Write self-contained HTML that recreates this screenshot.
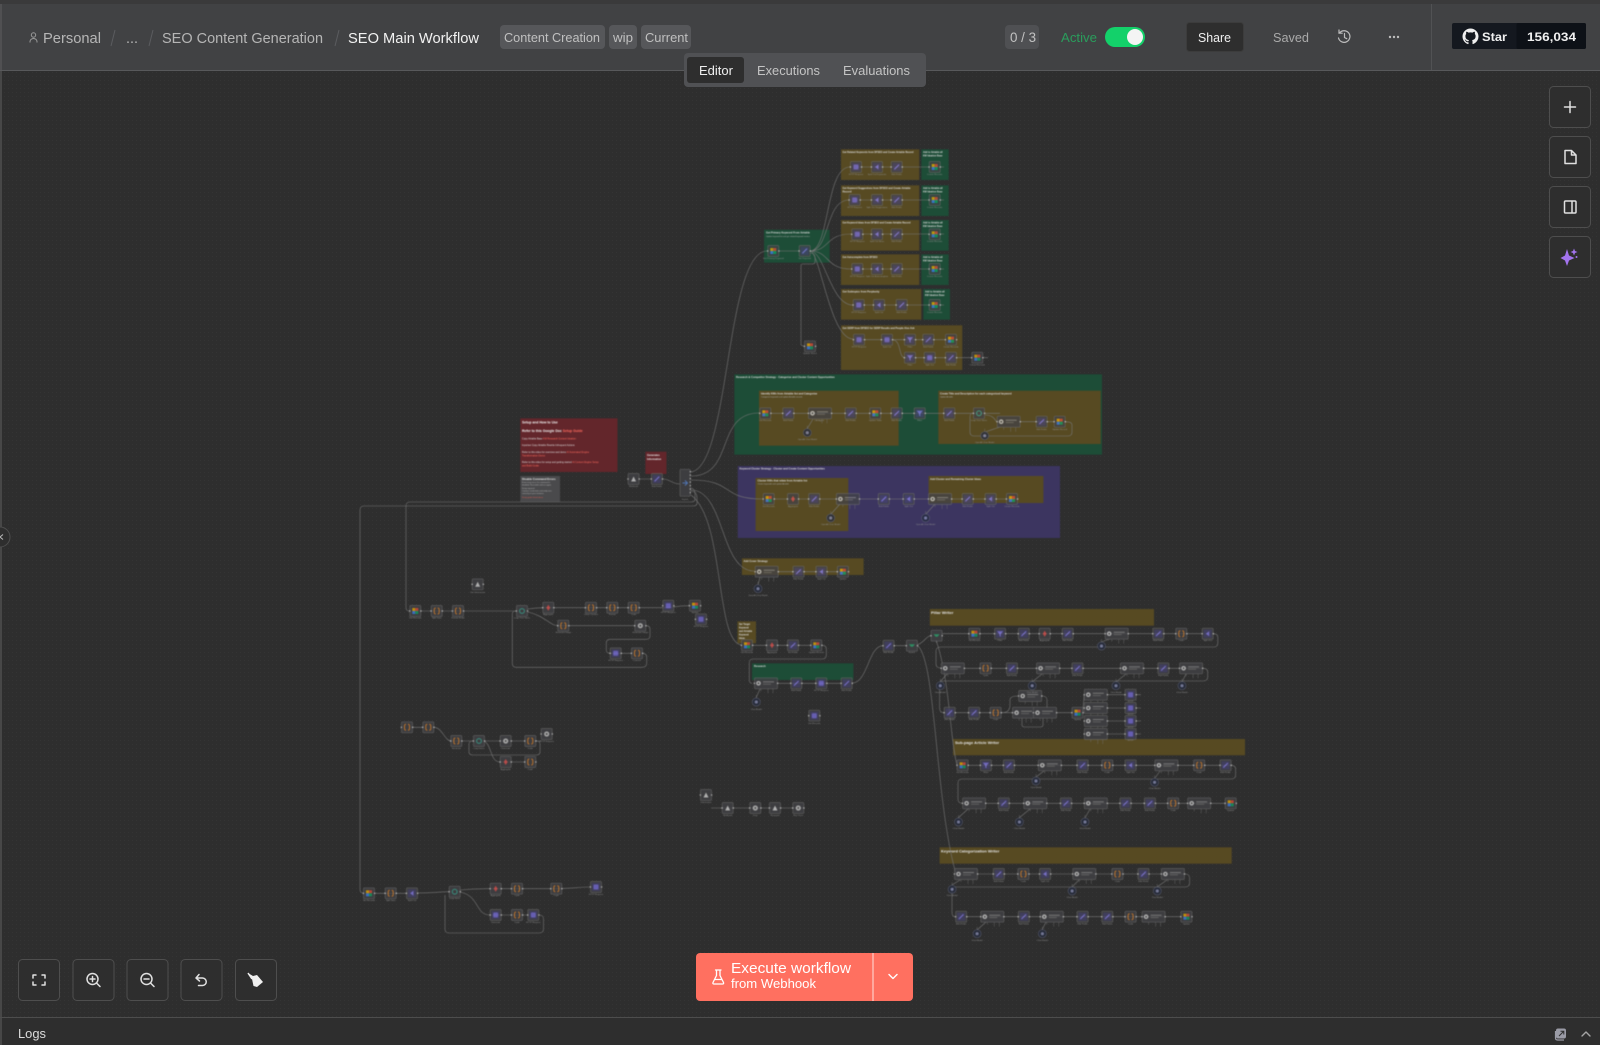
<!DOCTYPE html>
<html lang="en">
<head>
<meta charset="utf-8">
<title>SEO Main Workflow</title>
<style>
html,body{margin:0;padding:0;width:1600px;height:1045px;overflow:hidden;background:#2e2e2e}
svg{display:block;font-family:"Liberation Sans",sans-serif}
.ui{font-size:14px}
.graph{filter:blur(.4px)}
.w{fill:none;stroke:#767676;stroke-width:.6}
.t{fill:#dcdcdc;font-size:2.6px;font-weight:700}
.t2{fill:#dcdcdc;font-size:2.3px;font-weight:700}
.s{fill:#b0b0b0;font-size:1.9px}
.l{fill:#8e8e8e;font-size:2.2px;text-anchor:middle}
.nodes{opacity:.74}
.b{fill:#2e2e2e;stroke:#4e4e4e;stroke-width:1}
.i{fill:none;stroke:#e0e0e0;stroke-width:1.5;stroke-linecap:round;stroke-linejoin:round}
</style>
</head>
<body>
<svg width="1600" height="1045" viewBox="0 0 1600 1045" xmlns="http://www.w3.org/2000/svg">
<defs>
<pattern id="dots" width="4" height="4" patternUnits="userSpaceOnUse"><rect x="0" y="0" width="1" height="1" fill="#343434"/></pattern>
<g id="base"><rect x="-5.5" y="-5.5" width="11" height="11" rx="1" fill="#434347" stroke="#6c6c6c" stroke-width=".7"/><rect x="-6.3" y="-.7" width="1.4" height="1.4" fill="#d0d0d0"/><rect x="4.9" y="-.7" width="1.4" height="1.4" fill="#d0d0d0"/></g>
<g id="p"><use href="#base"/><rect x="-4" y="-4" width="8" height="8" fill="#47456e"/><path d="M-2.3 2.3L2.3-2.3" stroke="#8b80f0" stroke-width="1.2"/></g>
<g id="g"><use href="#base"/><rect x="-3" y="-3" width="3" height="3" fill="#f4b400"/><rect x="0" y="-3" width="3" height="3" fill="#e8503a"/><rect x="-3" y="0" width="3" height="3" fill="#4285f4"/><rect x="0" y="0" width="3" height="3" fill="#0fa968"/></g>
<g id="o"><use href="#base"/><path d="M-1 -3Q-2.5 -3 -2.5 -1V1Q-2.5 3 -1 3M1 -3Q2.5 -3 2.5 -1V1Q2.5 3 1 3" fill="none" stroke="#e8892c" stroke-width="1"/></g>
<g id="f"><use href="#base"/><rect x="-4" y="-4" width="8" height="8" fill="#47456e"/><path d="M-3-2.5H3L.6.5V3L-.6 2.2V.5Z" fill="#8b80f0"/></g>
<g id="m"><use href="#base"/><rect x="-4" y="-4" width="8" height="8" fill="#47456e"/><rect x="-2.5" y="-2.5" width="5" height="5" rx="1" fill="#7a70e0"/></g>
<g id="a"><use href="#base"/><rect x="-4" y="-4" width="8" height="8" fill="#47456e"/><path d="M1.5-2.5V2.5L-2 0Z" fill="#8b80f0"/></g>
<g id="k"><use href="#base"/><circle r="2.4" fill="none" stroke="#3db39c" stroke-width="1"/></g>
<g id="r"><use href="#base"/><path d="M0-3L2 0L0 3L-2 0Z" fill="#e0524f"/></g>
<g id="h"><use href="#base"/><circle r="2.6" fill="#cfcfcf"/><circle r="1" fill="#555"/></g>
<g id="n"><use href="#base"/><path d="M-2.5 2.5L0-2.5L2.5 2.5Z" fill="#dcdcdc"/></g>
<g id="e"><use href="#base"/><path d="M-3-1.5H3L1 1H-1Z" fill="#2fae75"/></g>
<g id="w"><rect x="-11.5" y="-5.5" width="23" height="11" rx="1" fill="#434347" stroke="#6c6c6c" stroke-width=".7"/><circle cx="-7.5" r="2.3" fill="#dcdcdc"/><circle cx="-7.5" r="1" fill="#555"/><rect x="-3" y="-2" width="11" height="1.1" fill="#8c8c8c"/><rect x="-3" y=".3" width="8" height="1.1" fill="#6e6e6e"/><rect x="-12.3" y="-.7" width="1.4" height="1.4" fill="#d0d0d0"/><rect x="10.9" y="-.7" width="1.4" height="1.4" fill="#d0d0d0"/><path d="M-5 5.5V8M2 5.5V10M7 5.5V10" stroke="#777" stroke-width=".5"/></g>
<g id="c"><circle r="4" fill="#242a3e" stroke="#5c6075" stroke-width=".7"/><circle r="1.6" fill="#8b90b8"/><path d="M0-4V-7" stroke="#777" stroke-width=".5"/></g>
</defs>

<!-- canvas -->
<rect width="1600" height="1045" fill="#2e2e2e"/>
<rect width="1600" height="1045" fill="url(#dots)"/>
<rect x="0" y="0" width="2" height="1045" fill="#474747"/>

<!-- GRAPH -->
<g class="graph">
<!-- sticky notes -->
<g fill="#574a22">
<rect x="841" y="149.3" width="78.3" height="30.7"/><rect x="841" y="185.3" width="78.3" height="30.7"/><rect x="841" y="220" width="78.3" height="30.7"/><rect x="841" y="254.3" width="78.3" height="30.7"/><rect x="841" y="289" width="80.3" height="30.7"/><rect x="841" y="325.3" width="121.3" height="44.7"/>
</g>
<g fill="#1d4d37">
<rect x="921.3" y="149.3" width="27.4" height="30.7"/><rect x="921.3" y="185.3" width="27.4" height="30.7"/><rect x="921.3" y="220" width="27.4" height="30.7"/><rect x="921.3" y="254.3" width="27.4" height="30.7"/><rect x="923.3" y="289" width="26.7" height="30.7"/><rect x="764" y="229.7" width="65.7" height="33"/><rect x="734.3" y="374.3" width="367.7" height="80.4"/><rect x="752" y="663.3" width="101.4" height="16.7"/>
</g>
<rect x="737.7" y="466" width="322.3" height="72" fill="#3c3560"/>
<g fill="#574a22">
<rect x="759" y="390.7" width="139.7" height="55"/><rect x="938.3" y="390.7" width="162.4" height="53.3"/><rect x="755.6" y="478" width="92.7" height="53"/><rect x="928.6" y="476" width="114.8" height="27"/><rect x="741.9" y="558.3" width="121.7" height="16.7"/><rect x="737.4" y="621.3" width="18.6" height="22"/><rect x="929.8" y="609" width="224.2" height="16.7"/><rect x="953" y="739" width="292" height="16.3"/><rect x="939.6" y="847.3" width="292.1" height="16.4"/>
</g>
<rect x="520.3" y="418.3" width="97.2" height="53.7" fill="#63262b"/>
<rect x="645.4" y="451.7" width="21.1" height="22.3" fill="#63262b"/>
<rect x="520.3" y="476" width="39.7" height="25.7" fill="#4a4a4c"/>

<!-- sticky text -->
<text class="t" x="842.5" y="153" textLength="71" lengthAdjust="spacingAndGlyphs">Get Related Keywords from DFSEO and Create Airtable Record</text>
<text class="t" x="842.5" y="189" textLength="68" lengthAdjust="spacingAndGlyphs">Get Keyword Suggestions from DFSEO and Create Airtable</text><text class="t" x="842.5" y="192.5">Record</text>
<text class="t" x="842.5" y="223.5" textLength="68" lengthAdjust="spacingAndGlyphs">Get Keyword Ideas from DFSEO and Create Airtable Record</text>
<text class="t" x="842.5" y="258" textLength="35" lengthAdjust="spacingAndGlyphs">Get Autocomplete from DFSEO</text>
<text class="t" x="842.5" y="292.5" textLength="37" lengthAdjust="spacingAndGlyphs">Get Subtopics from Perplexity</text>
<text class="t" x="842.5" y="329" textLength="72" lengthAdjust="spacingAndGlyphs">Get SERP from DFSEO for SERP Results and People Also Ask</text>
<g class="t2"><text x="923" y="153">Add to Airtable all</text><text x="923" y="156.5">KW Ideation Base</text><text x="923" y="189">Add to Airtable all</text><text x="923" y="192.5">KW Ideation Base</text><text x="923" y="223.5">Add to Airtable all</text><text x="923" y="227">KW Ideation Base</text><text x="923" y="258">Add to Airtable all</text><text x="923" y="261.5">KW Ideation Base</text><text x="925" y="292.5">Add to Airtable all</text><text x="925" y="296">KW Ideation Base</text></g>
<text class="t" x="766" y="233.5">Get Primary Keyword From Airtable</text>
<text class="s" x="766" y="237">Update keyword list and get related keyword metrics</text>
<text class="t" x="736" y="378">Research &amp; Competitor Strategy - Categorize and Cluster Content Opportunities</text>
<text class="t" x="761" y="394.5">Identify KWs from Airtable list and Categorize</text>
<text class="s" x="761" y="397.5">Categorize keywords and update Airtable records</text>
<text class="t" x="940" y="394.5">Create Title and Description for each categorized keyword</text>
<text class="s" x="940" y="397.5">Update Airtable</text>
<text class="t" x="739.5" y="469.5">Keyword Cluster Strategy - Cluster and Create Content Opportunities</text>
<text class="t" x="757.5" y="481.5">Cluster KWs that relate from Airtable list</text>
<text class="s" x="757.5" y="484.5">Cluster keywords and update Airtable</text>
<text class="t" x="930" y="480">Add Cluster and Remaining Cluster Ideas</text>
<text class="t" x="743.5" y="562">Add Cover Strategy</text>
<g class="t2"><text x="739" y="625">Set Target</text><text x="739" y="628.5">Keyword</text><text x="739" y="632">and Airtable</text><text x="739" y="635.5">Keyword</text><text x="739" y="639">Ideas</text></g>
<text class="t" x="754" y="667">Research</text>
<text x="931" y="614" fill="#e4e4e4" font-size="4" font-weight="700">Pillar Writer</text>
<text x="955" y="744" fill="#e4e4e4" font-size="4" font-weight="700">Sub-page Article Writer</text>
<text x="941" y="852.5" fill="#e4e4e4" font-size="4" font-weight="700">Keyword Categorization Writer</text>
<!-- red note -->
<text x="522" y="423.5" fill="#f0f0f0" font-size="3.4" font-weight="700">Setup and How to Use</text>
<text x="522" y="432" fill="#f0f0f0" font-size="3.4" font-weight="700">Refer to this Google Doc <tspan fill="#ff6b5f">Setup Guide</tspan></text>
<text x="522" y="439.5" fill="#ddd" font-size="2.4">Copy Airtable Base <tspan fill="#ff6b5f">KW Research Content Ideation</tspan></text>
<text x="522" y="446" fill="#ddd" font-size="2.4">Input/set Copy Airtable Rewrite Infrequent Actions</text>
<text x="522" y="453" fill="#ddd" font-size="2.4">Refer to this video for overview and demo <tspan fill="#ff6b5f">AI Automated Engine</tspan></text>
<text x="522" y="456.5" fill="#ff6b5f" font-size="2.4">Transformation Demo</text>
<text x="522" y="463" fill="#ddd" font-size="2.4">Refer to this video for setup and getting started <tspan fill="#ff6b5f">AI Content Engine Setup</tspan></text>
<text x="522" y="466.5" fill="#ff6b5f" font-size="2.4">and Build Guide</text>
<g fill="#e8e8e8" font-size="2.6" font-weight="700"><text x="647" y="456">Generates</text><text x="647" y="460">Information</text></g>
<text x="522" y="480" fill="#e8e8e8" font-size="2.8" font-weight="700">Disable Command Errors</text>
<g fill="#b5b5b5" font-size="1.9"><text x="522" y="483">Errors may occur if a command is</text><text x="522" y="485.5">disabled. Re-enable and run again.</text><text x="522" y="489">Setup required</text><text x="522" y="491.5">Connect credentials and verify runs</text><text x="522" y="494">correctly on your instance.</text></g>
<text x="522" y="498" fill="#d85a50" font-size="1.9">Setup guide linked above</text>

<!-- wires -->
<g class="w">
<path d="M690 472C730 472 725 251 767 251"/>
<path d="M691 476C735 476 715 413 759 413"/>
<path d="M691 480C735 480 720 499 762 499"/>
<path d="M691 490C725 490 720 571 754 571"/>
<path d="M691 495C725 520 715 640 741 645"/>
<path d="M690 488Q695 488 695 494V499Q695 502 691 502H410Q406 502 406 506V607Q406 611 409 611"/>
<path d="M690 491Q697 491 697 498V503Q697 506 693 506H364Q360 506 360 510V889Q360 893 363 893"/>
<path d="M640 479H651M663 479C670 479 672 484 680 484"/>
<path d="M779 251H799"/>
<path d="M810 251C830 251 825 167 850 167M810 251C830 251 825 200 849 200M810 251C830 251 825 234 851 234M810 251C830 251 825 269 851 269M810 251C825 251 830 305 853 305M810 251C820 251 830 339 853 339"/>
<path d="M810 253Q815 253 815 258V262Q815 264 812 264H803Q801 264 801 266V344Q801 346 804 346"/>
<path d="M856 167H896.7M896.7 167H929M934.7 167H944"/>
<path d="M855 200H897M897 200H929M934.7 200H944"/>
<path d="M857 234H897M897 234H929M934.7 234H944"/>
<path d="M857 269H897M897 269H929M934.7 269H944"/>
<path d="M859 305H902M902 305H929M934.7 305H944"/>
<path d="M859 339.7H945M892 339.7C902 339.7 898 357.7 905 357.7M905 357.7H945M956 357.7H972M982 357.7H988"/>
<path d="M771 413.3H1000"/><path d="M985 415C995 415 995 421.7 997 421.7M1020 421.7H1054M1065 421.7Q1072 421.7 1072 425V432Q1072 436 1068 436H974Q970 436 970 432V417Q970 413 973 413"/>
<path d="M774 499H1018"/>
<path d="M778 571.7H848"/>
<path d="M420 611H516"/><path d="M528 609C535 608 538 607.7 543 607.7H665C675 607.7 675 605.7 690 605.7"/>
<path d="M528 612C545 616 550 625.7 558 625.7H635M646 625.7Q650 625.7 650 629V636Q650 639.3 646 639.3H610Q606.3 639.3 606.3 643V650Q606.3 653.3 610 653.3H632M642 653.3Q646.7 653.3 646.7 657V663Q646.7 667.3 642 667.3H516Q512.3 667.3 512.3 663V614Q512.3 611 516 611"/>
<path d="M412 727.3H423M434 727.3C442 727.3 445 741 451 741H473M484 741H525M484 741C492 745 490 762 500 762H525M534 741H541"/>
<path d="M536 741Q540 741 540 744V752Q540 755 536 755H473Q469 755 469 752V744Q469 741 473 741"/>
<path d="M375 893.3H407M417 893C432 893 442 891.7 449 891.7M460 890C475 888.7 480 888.7 490 888.7H551C570 888.7 580 887 590 887"/>
<path d="M460 892C480 896 475 915 490 915H528M539 915Q543.5 915 543.5 919V929Q543.5 933 539 933H449Q445 933 445 929V895"/>
<path d="M711 808H804M733 808H744"/>
<path d="M752 645.3H810M822 645.3Q826.3 645.3 826.3 649V655Q826.3 659 822 659H753Q749.3 659 749.3 663V680Q749.3 683.3 752 683.3M777 683.3H841"/>
<path d="M852 683C868 683 868 646 883 645.7M894 645.7H906M917 645C925 642 926 636 931 635.7"/>
<path d="M942 633.7H1203"/>
<path d="M1213 633.7Q1217.8 633.7 1217.8 637V643Q1217.8 647 1214 647H941Q936 647 936 651V664Q936 668 941 668"/>
<path d="M964 668.3H1203"/>
<path d="M1203 668.3Q1207.7 668.3 1207.7 672V677Q1207.7 681 1203 681H944Q939.6 681 939.6 685V708Q939.6 712.7 944 712.7"/>
<path d="M955 712.7H1018M1057 712.7H1072"/>
<path d="M1002 712.7Q1010 712.7 1010 705V700Q1010 696 1018 696M1042 696Q1047 696 1047 700V708M1022 718V725Q1022 727 1025 727H1040Q1043 727 1043 725V718"/>
<path d="M1083 712C1083 705 1084 700 1084 695M1107 694.7H1125M1107 708H1125M1107 721H1125M1107 734H1125M1136 694.7H1141M1136 708H1141M1136 721H1141M1136 734H1141"/>
<path d="M918 646C936 662 935 800 956 874"/>
<path d="M936 640C950 680 950 740 957 765"/>
<path d="M968 765.3H1231"/>
<path d="M1231 765.3Q1235.6 765.3 1235.6 769V775Q1235.6 779 1231 779H962Q958 779 958 783V799Q958 803.3 962.5 803.3"/>
<path d="M985 803.3H1225"/>
<path d="M977 874H1185"/><path d="M1185 874Q1189.6 874 1189.6 878V883Q1189.6 887 1185 887H956Q952 887 952 891V912Q952 916.7 955 916.7"/>
<path d="M966 916.7H1181"/>
</g>
<!-- wide row helper wires from circles -->
<g class="w">
<path d="M807 429L813 419M985 432L1000 427M831 514L840 504M926 514L935 504M758 585L760 577M756 698L760 689M1101 642L1110 639M940 682L947 674M1032 682L1042 674M1116 682L1126 674M1182 682L1186 674M1036 777L1044 771M1155 778L1160 771M958 818L968 809M1019 818L1030 809M1085 818L1090 809M952 885L960 880M1072 887L1079 880M1157 887L1167 880M977 930L986 922M1042 930L1046 922"/>
</g>

<!-- nodes -->
<g class="nodes">
<use href="#m" x="856" y="167"/><use href="#a" x="877" y="167"/><use href="#p" x="896.7" y="167"/><use href="#g" x="934.7" y="167"/>
<use href="#m" x="854.7" y="200"/><use href="#a" x="877" y="200"/><use href="#p" x="896.7" y="200"/><use href="#g" x="934.7" y="200"/>
<use href="#m" x="857.3" y="234.3"/><use href="#a" x="877" y="234.3"/><use href="#p" x="896.7" y="234.3"/><use href="#g" x="934.7" y="234.3"/>
<use href="#m" x="857.3" y="269"/><use href="#a" x="877" y="269"/><use href="#p" x="896.7" y="269"/><use href="#g" x="934.7" y="269"/>
<use href="#m" x="858.7" y="305"/><use href="#a" x="879" y="305"/><use href="#p" x="901.7" y="305"/><use href="#g" x="934.7" y="305"/>
<use href="#m" x="859" y="339.7"/><use href="#m" x="887" y="339.7"/><use href="#f" x="910" y="339.7"/><use href="#p" x="928.3" y="339.7"/><use href="#g" x="951" y="339.7"/>
<use href="#f" x="910" y="357.7"/><use href="#m" x="929.7" y="357.7"/><use href="#p" x="951" y="357.7"/><use href="#g" x="977.3" y="357.7"/>
<use href="#g" x="773.3" y="251"/><use href="#p" x="804.7" y="251"/><use href="#g" x="810" y="346.3"/>
<use href="#g" x="765.3" y="413.3"/><use href="#p" x="788.3" y="413.3"/><use href="#w" x="820" y="413.3"/><use href="#p" x="850.7" y="413.3"/><use href="#g" x="875.3" y="413.3"/><use href="#p" x="896.7" y="413.3"/><use href="#f" x="919.7" y="413.3"/><use href="#p" x="949.3" y="413.3"/><use href="#k" x="979" y="413.3"/><use href="#w" x="1008.7" y="421.7"/><use href="#p" x="1041.7" y="421.7"/><use href="#g" x="1059.7" y="421.7"/>
<use href="#c" x="807.3" y="432.7"/><use href="#c" x="984.7" y="435.7"/>
<use href="#n" x="633.6" y="479"/><use href="#p" x="656.9" y="479"/>
<rect x="680" y="469.3" width="10.3" height="27" rx="1" fill="#434347" stroke="#6c6c6c" stroke-width=".7"/><path d="M682.5 483h5M685 480.5l2.5 2.5-2.5 2.5" stroke="#5d8ee0" fill="none" stroke-width="1"/>
<g fill="#d0d0d0"><rect x="689.6" y="471" width="1.4" height="1.2"/><rect x="689.6" y="474.5" width="1.4" height="1.2"/><rect x="689.6" y="478" width="1.4" height="1.2"/><rect x="689.6" y="481.5" width="1.4" height="1.2"/><rect x="689.6" y="485" width="1.4" height="1.2"/><rect x="689.6" y="488.5" width="1.4" height="1.2"/><rect x="689.6" y="492" width="1.4" height="1.2"/></g>
<use href="#g" x="768.7" y="499"/><use href="#r" x="793" y="499"/><use href="#p" x="814.2" y="499"/><use href="#w" x="847.9" y="499"/><use href="#p" x="883.8" y="499"/><use href="#a" x="908.7" y="499"/><use href="#w" x="940.1" y="499"/><use href="#p" x="967.7" y="499"/><use href="#a" x="990.6" y="499"/><use href="#g" x="1012" y="499"/><use href="#c" x="830.7" y="518"/><use href="#c" x="925.6" y="518"/>
<use href="#w" x="766.7" y="571.7"/><use href="#p" x="798.5" y="571.7"/><use href="#a" x="821.5" y="571.7"/><use href="#g" x="842.9" y="571.7"/><use href="#c" x="758" y="588.7"/>
<use href="#n" x="477.7" y="584.3"/>
<use href="#g" x="415.3" y="611"/><use href="#o" x="436.7" y="611"/><use href="#o" x="458" y="611"/><use href="#k" x="522" y="611"/><use href="#r" x="548.3" y="607.7"/><use href="#o" x="591" y="607.7"/><use href="#o" x="612.3" y="607.7"/><use href="#o" x="633.7" y="607.7"/><use href="#m" x="668.3" y="605.7"/><use href="#g" x="695" y="605.7"/><use href="#m" x="701" y="619.3"/><use href="#o" x="563.3" y="625.7"/><use href="#h" x="640.3" y="625.7"/><use href="#m" x="615.7" y="653.3"/><use href="#o" x="637" y="653.3"/>
<use href="#o" x="407" y="727.3"/><use href="#o" x="428.3" y="727.3"/><use href="#o" x="456.3" y="741"/><use href="#k" x="479" y="741"/><use href="#h" x="505.7" y="741"/><use href="#o" x="530.3" y="741"/><use href="#h" x="546.7" y="734"/><use href="#r" x="505.7" y="762"/><use href="#o" x="530.3" y="762"/>
<use href="#g" x="369" y="893.3"/><use href="#o" x="390.7" y="893.3"/><use href="#a" x="412" y="893.3"/><use href="#k" x="454.7" y="891.7"/><use href="#r" x="495.7" y="888.7"/><use href="#o" x="517" y="888.7"/><use href="#o" x="556.3" y="888.7"/><use href="#m" x="596" y="887"/><use href="#m" x="495.7" y="915"/><use href="#o" x="517" y="915"/><use href="#m" x="533.3" y="915"/>
<use href="#n" x="706" y="795"/><use href="#n" x="727.7" y="808"/><use href="#h" x="755.3" y="808"/><use href="#n" x="775" y="808"/><use href="#h" x="798.3" y="808"/><use href="#m" x="814.3" y="715.7"/>
<use href="#g" x="747" y="645.3"/><use href="#r" x="772" y="645.3"/><use href="#p" x="793" y="645.3"/><use href="#g" x="816.3" y="645.3"/>
<use href="#w" x="766" y="683.3"/><use href="#p" x="796.3" y="683.3"/><use href="#m" x="821.3" y="683.3"/><use href="#p" x="846.7" y="683.3"/><use href="#c" x="756.3" y="702"/>
<use href="#p" x="888.6" y="645.7"/><use href="#e" x="911.9" y="645.7"/><use href="#e" x="936.6" y="635.7"/>
<use href="#g" x="974.4" y="633.7"/><use href="#f" x="1000.1" y="633.7"/><use href="#p" x="1023.8" y="633.7"/><use href="#r" x="1044.7" y="633.7"/><use href="#p" x="1067.7" y="633.7"/><use href="#w" x="1116.7" y="633.7"/><use href="#p" x="1158.3" y="633.7"/><use href="#o" x="1181.3" y="633.7"/><use href="#a" x="1207.7" y="633.7"/><use href="#c" x="1101.5" y="646"/>
<use href="#w" x="952.8" y="668.3"/><use href="#o" x="985.6" y="668.3"/><use href="#p" x="1011.9" y="668.3"/><use href="#w" x="1048.1" y="668.3"/><use href="#p" x="1077.5" y="668.3"/><use href="#w" x="1132" y="668.3"/><use href="#p" x="1163.4" y="668.3"/><use href="#w" x="1191.1" y="668.3"/><use href="#c" x="940.3" y="685.7"/><use href="#c" x="1032.2" y="685.7"/><use href="#c" x="1116" y="685.7"/><use href="#c" x="1182" y="685.7"/>
<use href="#p" x="949.7" y="712.7"/><use href="#p" x="974.1" y="712.7"/><use href="#o" x="995.7" y="712.7"/><use href="#w" x="1024.1" y="712.7"/><use href="#w" x="1045" y="712.7"/><use href="#g" x="1077.5" y="712.7"/><use href="#w" x="1030.2" y="696"/>
<use href="#w" x="1095.8" y="694.7"/><use href="#w" x="1095.8" y="708"/><use href="#w" x="1095.8" y="721"/><use href="#w" x="1095.8" y="734"/><use href="#m" x="1130.6" y="694.7"/><use href="#m" x="1130.6" y="708"/><use href="#m" x="1130.6" y="721"/><use href="#m" x="1130.6" y="734"/>
<use href="#g" x="962.6" y="765.3"/><use href="#f" x="985.9" y="765.3"/><use href="#p" x="1008.9" y="765.3"/><use href="#w" x="1049.8" y="765.3"/><use href="#p" x="1082.6" y="765.3"/><use href="#o" x="1107.3" y="765.3"/><use href="#a" x="1130.6" y="765.3"/><use href="#w" x="1166.4" y="765.3"/><use href="#o" x="1199.2" y="765.3"/><use href="#p" x="1225.6" y="765.3"/><use href="#c" x="1036" y="781"/><use href="#c" x="1154.6" y="782.3"/>
<use href="#w" x="974.1" y="803.3"/><use href="#p" x="1003.8" y="803.3"/><use href="#w" x="1035.3" y="803.3"/><use href="#p" x="1066" y="803.3"/><use href="#w" x="1095.8" y="803.3"/><use href="#p" x="1125.5" y="803.3"/><use href="#p" x="1149.9" y="803.3"/><use href="#o" x="1173.2" y="803.3"/><use href="#w" x="1199.2" y="803.3"/><use href="#g" x="1230.7" y="803.3"/><use href="#c" x="958.5" y="822"/><use href="#c" x="1019.4" y="822"/><use href="#c" x="1085" y="822"/>
<use href="#w" x="966" y="874"/><use href="#p" x="998.8" y="874"/><use href="#o" x="1023.4" y="874"/><use href="#a" x="1045.1" y="874"/><use href="#w" x="1084.3" y="874"/><use href="#o" x="1117.4" y="874"/><use href="#p" x="1143.5" y="874"/><use href="#w" x="1172.9" y="874"/><use href="#c" x="952.1" y="889.3"/><use href="#c" x="1072.1" y="891"/><use href="#c" x="1157.3" y="891"/>
<use href="#p" x="961.2" y="916.7"/><use href="#w" x="992.3" y="916.7"/><use href="#p" x="1023.8" y="916.7"/><use href="#w" x="1051.8" y="916.7"/><use href="#p" x="1082.6" y="916.7"/><use href="#p" x="1107.3" y="916.7"/><use href="#o" x="1130.6" y="916.7"/><use href="#w" x="1153.6" y="916.7"/><use href="#g" x="1186.4" y="916.7"/><use href="#c" x="977.1" y="933.7"/><use href="#c" x="1042.4" y="933.7"/>
</g>

<!-- node labels -->
<g class="l">
<text x="856" y="175">HTTP Request</text><text x="877" y="175">Split Out Keywords</text><text x="896.7" y="175">Edit Fields</text><text x="934.7" y="175">Create Records</text>
<text x="854.7" y="208">HTTP Request</text><text x="877" y="208">Split Out Suggestions</text><text x="896.7" y="208">Edit Fields</text><text x="934.7" y="208">Create Records</text>
<text x="857.3" y="242">HTTP Request</text><text x="877" y="242">Split Out Ideas</text><text x="896.7" y="242">Edit Fields</text><text x="934.7" y="242">Create Records</text>
<text x="857.3" y="277">HTTP Request</text><text x="877" y="277">Split Out Autocomplete</text><text x="896.7" y="277">Edit Fields</text><text x="934.7" y="277">Create Records</text>
<text x="858.7" y="313">HTTP Request</text><text x="879" y="313">Split Out</text><text x="901.7" y="313">Edit Fields</text><text x="934.7" y="313">Create Records</text>
<text x="859" y="347.5">HTTP Request</text><text x="887" y="347.5">Split Out</text><text x="910" y="347.5">Filter</text><text x="928.3" y="347.5">Edit Fields</text><text x="951" y="347.5">Create Records</text>
<text x="910" y="365.5">Filter</text><text x="929.7" y="365.5">Split Out</text><text x="951" y="365.5">Edit Fields</text><text x="977.3" y="365.5">Create Records</text>
<text x="773.3" y="259">Get Primary Keyword</text><text x="804.7" y="259">Set Keyword</text><text x="810" y="354">Update Status</text>
<text x="765.3" y="421">Get Records</text><text x="788.3" y="421">Edit Fields</text><text x="820" y="421">AI Agent</text><text x="850.7" y="421">Edit Fields</text><text x="875.3" y="421">Update Table</text><text x="896.7" y="421">Edit Fields</text><text x="919.7" y="421">Filter</text><text x="949.3" y="421">Edit Fields</text><text x="979" y="421">Loop Over Items</text><text x="1041.7" y="430">Edit Fields</text><text x="1059.7" y="430">Update Record</text>
<text x="807.3" y="440">OpenAI Chat Model</text><text x="984.7" y="443">OpenAI Chat Model</text>
<text x="633.6" y="487">Webhook</text><text x="656.9" y="487">Edit Fields</text><text x="685" y="500">Switch</text>
<text x="768.7" y="507">Get Records</text><text x="793" y="507">Aggregate</text><text x="814.2" y="507">Edit Fields</text><text x="883.8" y="507">Edit Fields</text><text x="908.7" y="507">Split Out</text><text x="967.7" y="507">Edit Fields</text><text x="990.6" y="507">Split Out</text><text x="1012" y="507">Create Records</text>
<text x="830.7" y="525">OpenAI Chat Model</text><text x="925.6" y="525">OpenAI Chat Model</text>
<text x="798.5" y="579.5">Edit Fields</text><text x="821.5" y="579.5">Split Out</text><text x="842.9" y="579.5">Update</text><text x="758" y="596">OpenAI Chat Model</text>
<text x="477.7" y="593">Get Information</text>
<text x="415.3" y="618.5">Get Records</text><text x="436.7" y="618.5">Split Data</text><text x="458" y="618.5">Format Fields</text><text x="522" y="618.5">Loop Over Items</text><text x="548.3" y="615">Aggregate</text><text x="591" y="615">Clean Content</text><text x="612.3" y="615">Format</text><text x="633.7" y="615">Code</text><text x="668.3" y="613">HTTP Request</text><text x="695" y="613">Update</text><text x="701" y="627">HTTP Request</text><text x="563.3" y="633">Generate Image</text><text x="640.3" y="633">Generate Image</text><text x="615.7" y="661">HTTP Request</text><text x="637" y="661">Convert</text>
<text x="456.3" y="749">Generate</text><text x="479" y="749">Loop Items</text><text x="505.7" y="749">Generate</text><text x="530.3" y="749">Code</text><text x="546.7" y="742">HTTP Request</text><text x="505.7" y="770">Aggregate</text><text x="530.3" y="770">Code</text>
<text x="369" y="901">Get Records</text><text x="390.7" y="901">Split Data</text><text x="412" y="901">Split Out</text><text x="454.7" y="899">Loop Items</text><text x="495.7" y="896">Aggregate</text><text x="517" y="896">Code</text><text x="556.3" y="896">Code</text><text x="596" y="895">HTTP Request</text><text x="495.7" y="923">Generate</text><text x="517" y="923">Code</text><text x="533.3" y="923">HTTP Request</text>
<text x="727.7" y="816">Webhook</text><text x="755.3" y="816">Data</text><text x="775" y="816">Respond</text><text x="798.3" y="816">Run Once</text><text x="814.3" y="724">Get Records</text><text x="706" y="803">Information</text>
<text x="747" y="653">Get Records</text><text x="772" y="653">Aggregate</text><text x="793" y="653">Set Fields</text><text x="816.3" y="653">Update Record</text>
<text x="796.3" y="691">Edit Fields</text><text x="821.3" y="691">HTTP Request</text><text x="846.7" y="691">Edit Fields</text><text x="756.3" y="710">Chat Model</text>
<text x="888.6" y="653">Edit Fields</text><text x="911.9" y="653">Switch</text><text x="936.6" y="643">If</text>
<text x="974.4" y="641">Get Record</text><text x="1000.1" y="641">Filter</text><text x="1023.8" y="641">Edit Fields</text><text x="1044.7" y="641">Aggregate</text><text x="1067.7" y="641">Edit Fields</text><text x="1158.3" y="641">Edit Fields</text><text x="1181.3" y="641">Code</text><text x="1207.7" y="641">Split Out</text>
<text x="985.6" y="676">Code</text><text x="1011.9" y="676">Edit Fields</text><text x="1077.5" y="676">Edit Fields</text><text x="1163.4" y="676">Edit Fields</text><text x="940.3" y="693">Chat Model</text><text x="1032.2" y="693">Chat Model</text><text x="1116" y="693">Chat Model</text><text x="1182" y="693">Chat Model</text>
<text x="949.7" y="720">Edit Fields</text><text x="974.1" y="720">Edit Fields</text><text x="995.7" y="720">Code</text><text x="1077.5" y="720">Update</text>
<text x="1130.6" y="702">HTTP</text><text x="1130.6" y="715">HTTP</text><text x="1130.6" y="728">HTTP</text><text x="1130.6" y="741">HTTP</text>
<text x="962.6" y="773">Get Records</text><text x="985.9" y="773">Filter</text><text x="1008.9" y="773">Edit Fields</text><text x="1082.6" y="773">Edit Fields</text><text x="1107.3" y="773">Code</text><text x="1130.6" y="773">Split Out</text><text x="1199.2" y="773">Code</text><text x="1225.6" y="773">Edit Fields</text><text x="1036" y="788">Chat Model</text><text x="1154.6" y="789">Chat Model</text>
<text x="1003.8" y="811">Edit Fields</text><text x="1066" y="811">Edit Fields</text><text x="1125.5" y="811">Edit Fields</text><text x="1149.9" y="811">Edit Fields</text><text x="1173.2" y="811">Code</text><text x="1230.7" y="811">Update</text><text x="958.5" y="829">Chat Model</text><text x="1019.4" y="829">Chat Model</text><text x="1085" y="829">Chat Model</text>
<text x="998.8" y="882">Edit Fields</text><text x="1023.4" y="882">Code</text><text x="1045.1" y="882">Split Out</text><text x="1117.4" y="882">Code</text><text x="1143.5" y="882">Edit Fields</text><text x="952.1" y="896">Chat Model</text><text x="1072.1" y="898">Chat Model</text><text x="1157.3" y="898">Chat Model</text>
<text x="961.2" y="924.5">Edit Fields</text><text x="1023.8" y="924.5">Edit Fields</text><text x="1082.6" y="924.5">Edit Fields</text><text x="1107.3" y="924.5">Edit Fields</text><text x="1130.6" y="924.5">Code</text><text x="1186.4" y="924.5">Update</text><text x="977.1" y="941">Chat Model</text><text x="1042.4" y="941">Chat Model</text>
</g>
</g>

<!-- header -->
<rect x="0" y="0" width="1600" height="4" fill="#3a3a3b"/>
<rect x="0" y="4" width="1600" height="66" fill="#414244"/>
<rect x="0" y="70" width="1600" height="1" fill="#58595b"/>
<rect x="0" y="4" width="2" height="66" fill="#505052"/>
<rect x="1431" y="4" width="1" height="66" fill="#515254"/>
<!-- breadcrumb -->
<g fill="none" stroke="#9a9a9a" stroke-width="1"><circle cx="33.5" cy="35" r="2.2"/><path d="M30 42.5v-1a3.5 3 0 0 1 7 0v1"/></g>
<g class="ui" font-size="15">
<text x="43" y="43" fill="#b6b6b6" font-size="15" textLength="58" lengthAdjust="spacingAndGlyphs">Personal</text>
<text x="126" y="43" fill="#b6b6b6" font-size="15" textLength="12" lengthAdjust="spacingAndGlyphs">...</text>
<text x="162" y="43" fill="#b6b6b6" font-size="15" textLength="161" lengthAdjust="spacingAndGlyphs">SEO Content Generation</text>
<text x="348" y="43" fill="#f2f2f2" font-size="15" textLength="131" lengthAdjust="spacingAndGlyphs">SEO Main Workflow</text>
</g>
<path d="M115 30L111 46M153 30L149 46M339 30L335 46" stroke="#5b5c5f" stroke-width="1" fill="none"/>
<!-- tags -->
<g fill="#56575a"><rect x="500" y="25" width="105" height="24" rx="4"/><rect x="609" y="25" width="28" height="24" rx="4"/><rect x="641" y="25" width="50" height="24" rx="4"/></g>
<g fill="#c0c0c0" font-size="13"><text x="504" y="42" textLength="96" lengthAdjust="spacingAndGlyphs">Content Creation</text><text x="613" y="42" textLength="20" lengthAdjust="spacingAndGlyphs">wip</text><text x="645" y="42" textLength="43" lengthAdjust="spacingAndGlyphs">Current</text></g>
<!-- tabs -->
<rect x="684" y="53" width="242" height="34" rx="4" fill="#505154"/>
<rect x="687" y="57" width="57" height="26" rx="3" fill="#2e2e2e"/>
<text x="699" y="75" fill="#f0f0f0" font-size="13" textLength="34" lengthAdjust="spacingAndGlyphs">Editor</text>
<text x="757" y="75" fill="#c4c4c4" font-size="13" textLength="63" lengthAdjust="spacingAndGlyphs">Executions</text>
<text x="843" y="75" fill="#c4c4c4" font-size="13" textLength="67" lengthAdjust="spacingAndGlyphs">Evaluations</text>
<!-- right header -->
<rect x="1005" y="25" width="34" height="24" rx="4" fill="#4f5053"/>
<text x="1010" y="42" fill="#c2c2c2" font-size="14" textLength="26" lengthAdjust="spacingAndGlyphs">0 / 3</text>
<text x="1061" y="42" fill="#2a9d5c" font-size="13" textLength="36" lengthAdjust="spacingAndGlyphs">Active</text>
<rect x="1105" y="27" width="40" height="20" rx="10" fill="#13d16a"/><circle cx="1135" cy="37" r="8" fill="#f4f4f4"/>
<rect x="1186.5" y="22.5" width="57" height="29" rx="3" fill="#2e2e2e" stroke="#3c3c3c"/>
<text x="1198" y="42" fill="#f0f0f0" font-size="13" textLength="33" lengthAdjust="spacingAndGlyphs">Share</text>
<text x="1273" y="42" fill="#aaa" font-size="13" textLength="36" lengthAdjust="spacingAndGlyphs">Saved</text>
<g fill="none" stroke="#bdbdbd" stroke-width="1.2" stroke-linecap="round"><path d="M1339.5 33A5.8 5.8 0 1 1 1338.5 38M1339 30v3.2h3.2M1344.5 33.5V37.5l2.3 1.2"/></g>
<g fill="#bdbdbd"><circle cx="1390" cy="37" r="1.2"/><circle cx="1394" cy="37" r="1.2"/><circle cx="1398" cy="37" r="1.2"/></g>
<!-- github -->
<rect x="1452" y="23" width="134" height="26" rx="2" fill="#14181f"/>
<rect x="1516.5" y="23" width="69.5" height="26" rx="2" fill="#0d1117"/>
<g transform="translate(1462.5 28.5) scale(1)"><path fill="#f0f0f0" d="M8 0C3.58 0 0 3.58 0 8c0 3.54 2.29 6.53 5.47 7.59.4.07.55-.17.55-.38 0-.19-.01-.82-.01-1.49-2.01.37-2.53-.49-2.69-.94-.09-.23-.48-.94-.82-1.13-.28-.15-.68-.52-.01-.53.63-.01 1.08.58 1.23.82.72 1.21 1.87.87 2.33.66.07-.52.28-.87.51-1.07-1.78-.2-3.64-.89-3.64-3.95 0-.87.31-1.59.82-2.15-.08-.2-.36-1.02.08-2.12 0 0 .67-.21 2.2.82.64-.18 1.32-.27 2-.27s1.36.09 2 .27c1.53-1.04 2.2-.82 2.2-.82.44 1.1.16 1.92.08 2.12.51.56.82 1.27.82 2.15 0 3.07-1.87 3.75-3.65 3.95.29.25.54.73.54 1.48 0 1.07-.01 1.93-.01 2.2 0 .21.15.46.55.38A8.01 8.01 0 0 0 16 8c0-4.42-3.58-8-8-8z"/></g>
<text x="1482" y="41" fill="#f0f0f0" font-size="12" font-weight="700" textLength="25" lengthAdjust="spacingAndGlyphs">Star</text>
<text x="1527" y="41" fill="#f0f0f0" font-size="12" font-weight="700" textLength="49" lengthAdjust="spacingAndGlyphs">156,034</text>

<!-- right side buttons -->
<rect class="b" x="1549.5" y="86.5" width="41" height="41" rx="4"/><rect class="b" x="1549.5" y="136.5" width="41" height="41" rx="4"/><rect class="b" x="1549.5" y="186.5" width="41" height="41" rx="4"/><rect class="b" x="1549.5" y="236.5" width="41" height="41" rx="4"/>
<path class="i" d="M1570 101.5V112.5M1564.5 107H1575.5"/>
<path class="i" d="M1565 150.5H1571.5L1576 155V163.5H1565ZM1571.5 150.5V155H1576"/>
<rect class="i" x="1564.5" y="201" width="11.5" height="12" rx="1"/><path class="i" d="M1572 201.5V212.5" stroke-width="2.6"/>
<path d="M1567 249L1569 255.5L1574.5 258L1569 260.5L1567 266L1565 260.5L1560.5 258L1565 255.5Z" fill="#a374ee"/><path d="M1574 248.5L1575 251L1577.5 252L1575 253L1574 255.5L1573 253L1570.5 252L1573 251Z" fill="#a374ee"/><circle cx="1576.5" cy="257" r="1" fill="#a374ee"/>

<!-- bottom-left buttons -->
<rect class="b" x="18.5" y="959.5" width="41" height="41" rx="4"/><rect class="b" x="73" y="959.5" width="41" height="41" rx="4"/><rect class="b" x="127" y="959.5" width="41" height="41" rx="4"/><rect class="b" x="181" y="959.5" width="41" height="41" rx="4"/><rect class="b" x="235.5" y="959.5" width="41" height="41" rx="4"/>
<path class="i" d="M33 978V975H36M42 975H45V978M45 982V985H42M36 985H33V982"/>
<circle class="i" cx="92.5" cy="979" r="5.5"/><path class="i" d="M96.5 983L100 986.5M90 979H95M92.5 976.5V981.5"/>
<circle class="i" cx="146.5" cy="979" r="5.5"/><path class="i" d="M150.5 983L154 986.5M144 979H149"/>
<path class="i" d="M199 974.5L196 978L199.5 981M196.5 978H202.5A3.7 3.7 0 0 1 202.5 985.5H198.5"/>
<path d="M248 973L253 976L257 975L263 982L257 987L253.5 986L252 979Z" fill="#f0f0f0"/><path d="M248 973L252 979" stroke="#f0f0f0" stroke-width="1.5"/>

<!-- execute -->
<rect x="696" y="953" width="217" height="48" rx="4" fill="#ff7060"/>
<rect x="872.5" y="953" width="1" height="48" fill="#ffe0dc"/>
<path d="M715.5 970H721M716.5 970V975.5L713 982.5Q712.5 984 714 984H722.5Q724 984 723.5 982.5L720 975.5V970M714.5 979.5H722" fill="none" stroke="#fff" stroke-width="1.3" stroke-linejoin="round" stroke-linecap="round"/>
<text x="731" y="973" fill="#fff" font-size="15" textLength="120" lengthAdjust="spacingAndGlyphs">Execute workflow</text>
<text x="731" y="988" fill="#fff" font-size="13" textLength="85" lengthAdjust="spacingAndGlyphs">from Webhook</text>
<path d="M889 974.5L893 978.5L897 974.5" fill="none" stroke="#fff" stroke-width="1.4" stroke-linecap="round" stroke-linejoin="round"/>

<!-- logs bar -->
<rect x="0" y="1017" width="1600" height="1.2" fill="#4d4d4d"/>
<rect x="0" y="1018" width="1600" height="27" fill="#2e2e2e"/>
<rect x="0" y="1018" width="2" height="27" fill="#474747"/>
<text x="18" y="1038" fill="#dcdcdc" font-size="13" textLength="28" lengthAdjust="spacingAndGlyphs">Logs</text>
<rect x="1556.5" y="1029" width="9" height="9" rx="1.5" fill="#9a9ba6" stroke="#9a9ba6"/><path d="M1555.5 1031V1038Q1555.5 1040 1557.5 1040H1564" fill="none" stroke="#9a9ba6" stroke-width="1.2"/><path d="M1559 1036L1563.5 1031.5M1560.5 1031.2H1563.8V1034.5" fill="none" stroke="#2e2e2e" stroke-width="1"/>
<path d="M1582 1036L1586 1032L1590 1036" fill="none" stroke="#a5a5a5" stroke-width="1.4" stroke-linecap="round" stroke-linejoin="round"/>

<!-- sidebar handle -->
<circle cx="0" cy="537" r="10" fill="#2e2e2e" stroke="#4d4d4d" stroke-width="1"/>
<path d="M3 534.5L0 537L3 539.5" fill="none" stroke="#bbb" stroke-width="1"/>
</svg>
</body>
</html>
